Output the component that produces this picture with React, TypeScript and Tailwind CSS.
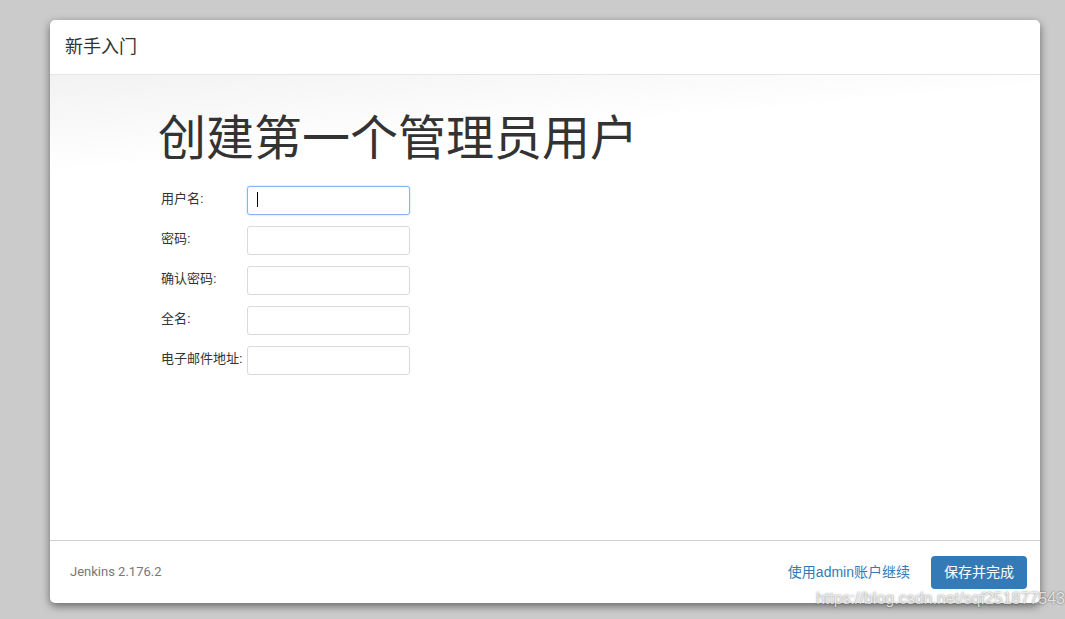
import React from "react"

const cjk = '"Liberation Sans", "Noto Sans CJK SC", sans-serif'

const fields = ["用户名:", "密码:", "确认密码:", "全名:", "电子邮件地址:"]

function Field({ label, focused }: { label: string; focused?: boolean }) {
    return (
        <div className="flex items-center h-[29px]">
            <label className="w-[86px] text-[13px] text-[#333] leading-none -mt-[4px] whitespace-nowrap">{label}</label>
            <div className="relative">
                <input
                    type="text"
                    className={
                        focused
                            ? "block w-[163px] h-[29px] rounded-[3px] border border-[#8cb3f0] bg-white outline-none shadow-[0_0_2px_rgba(102,175,233,0.6)]"
                            : "block w-[163px] h-[29px] rounded-[3px] border border-[#d9d9d9] bg-white outline-none"
                    }
                />
                {focused && <span className="absolute left-[10px] top-[6px] w-px h-[15px] bg-[#000]" />}
            </div>
        </div>
    )
}

export default function App() {
    return (
        <div className="relative w-full h-[619px] bg-[#cbcbcb] pt-[20px] pl-[50px]" style={{ fontFamily: cjk }}>
            <div className="w-[990px] h-[583px] flex flex-col bg-white rounded-[5px] shadow-[0_3px_9px_rgba(0,0,0,0.5)] overflow-hidden">
                <div className="h-[55px] shrink-0 flex items-center px-[15px] border-b border-[#e5e5e5] text-[18px] text-[#333]">
                    新手入门
                </div>
                <div className="flex-1 bg-[linear-gradient(175deg,#f2f2f2_0%,#ffffff_18%,#ffffff_100%)] pl-[108px] pt-[38px]">
                    <h1 className="text-[48px] leading-[1.1] text-[#333] font-normal tracking-[0px]">创建第一个管理员用户</h1>
                    <div className="flex flex-col gap-[11px] pl-[3px] mt-[20px]">
                        {fields.map((f, i) => (
                            <Field key={f} label={f} focused={i === 0} />
                        ))}
                    </div>
                </div>
                <div className="h-[63px] shrink-0 flex items-center px-[20px] border-t border-[#cfcfcf]">
                    <span className="text-[13px] text-[#777]" style={{ fontFamily: 'Roboto, "Liberation Sans", sans-serif' }}>Jenkins 2.176.2</span>
                    <a className="ml-auto mr-[21px] text-[14px] text-[#337ab7]">使用admin账户继续</a>
                    <button className="h-[33px] px-[13px] rounded-[4px] bg-[#337ab7] text-white text-[14px] -mr-[7px]">保存并完成</button>
                </div>
            </div>
            <span
                className="absolute right-[0px] bottom-[8px] text-[16px] text-white/75 [text-shadow:0_0_2px_rgba(0,0,0,0.55)] pointer-events-none"
                style={{ fontFamily: '"Liberation Sans", sans-serif' }}
            >
                https://blog.csdn.net/sqf251877543
            </span>
        </div>
    )
}
